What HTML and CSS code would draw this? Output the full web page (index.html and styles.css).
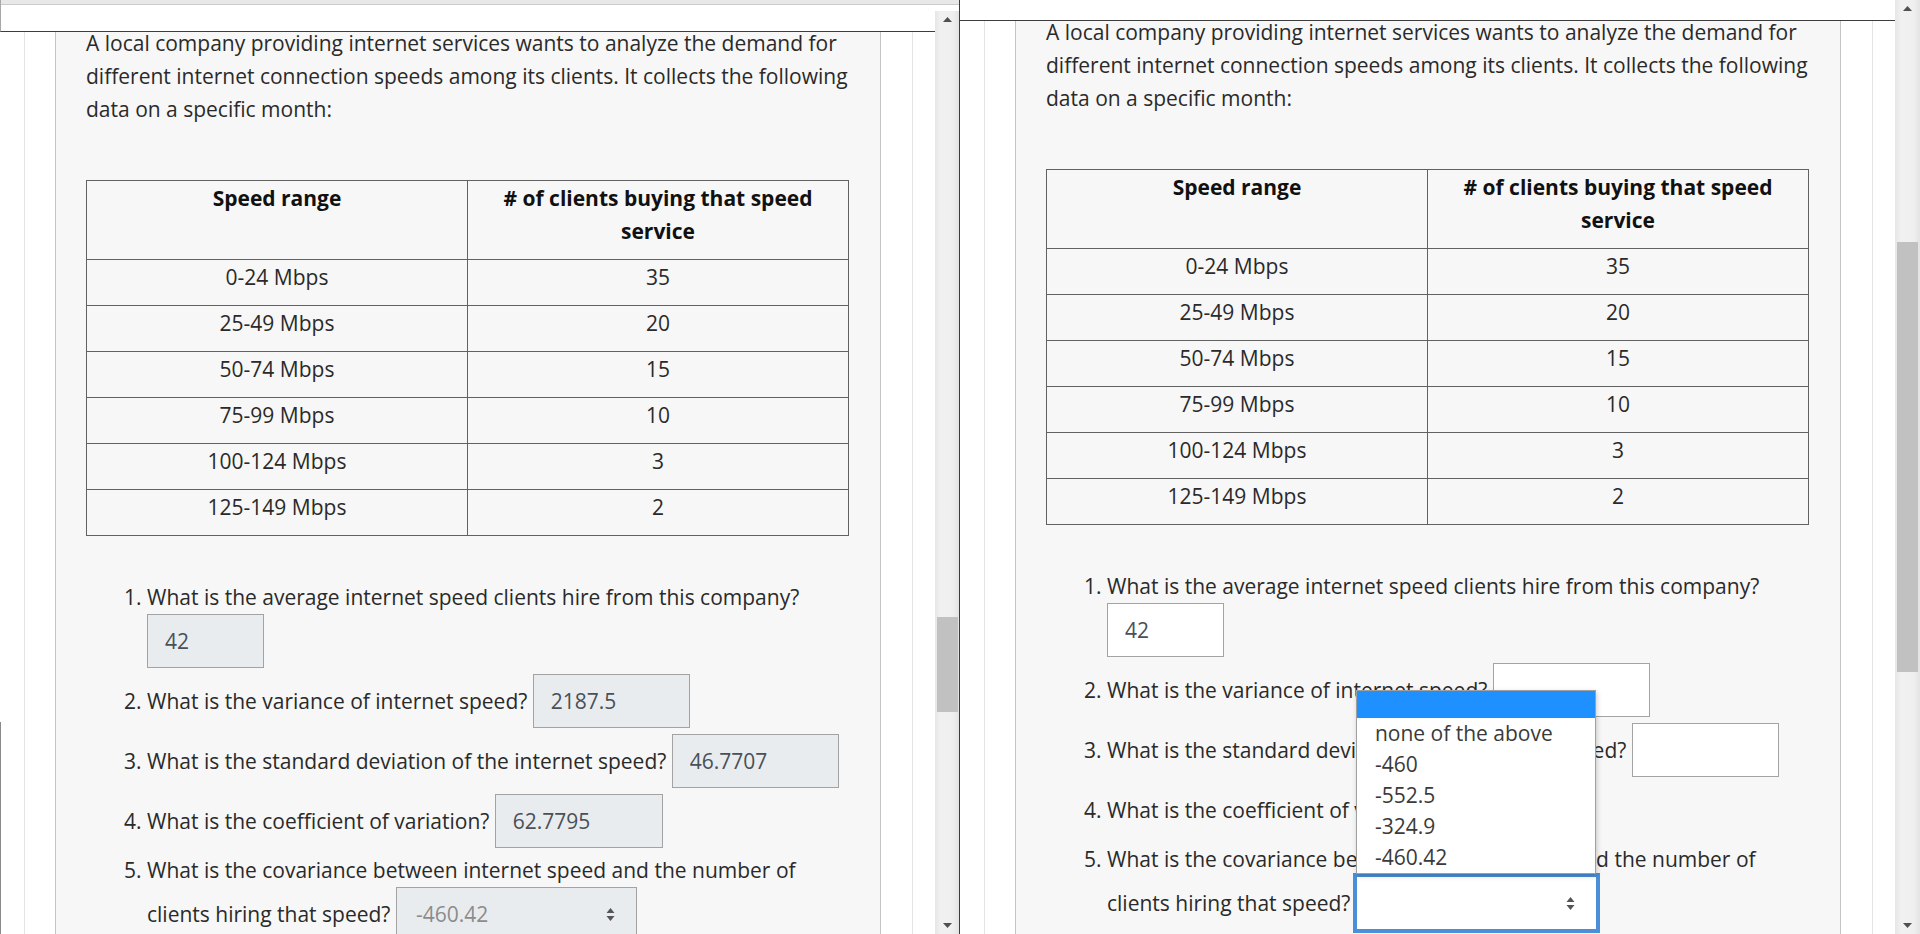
FILE: index.html
```html
<!DOCTYPE html>
<html lang="en">
<head>
<meta charset="utf-8">
<title>Internet speed demand</title>
<link rel="stylesheet" href="styles.css">
</head>
<body>
<div class="screen">

  <section class="frame frame-left">
    <div class="frame-strip"></div>
    <div class="frame-body">
      <div class="viewport">
        <div class="topbar"></div>
        <div class="page">
          <div class="container">
            <div class="card">
              <p class="intro">A local company providing internet services wants to analyze the demand for different internet connection speeds among its clients. It collects the following data on a specific month:</p>
              <table class="data">
                <colgroup><col class="half"><col class="half"></colgroup>
                <thead>
                  <tr><th>Speed range</th><th># of clients buying that speed service</th></tr>
                </thead>
                <tbody>
                  <tr><td>0-24 Mbps</td><td>35</td></tr>
                  <tr><td>25-49 Mbps</td><td>20</td></tr>
                  <tr><td>50-74 Mbps</td><td>15</td></tr>
                  <tr><td>75-99 Mbps</td><td>10</td></tr>
                  <tr><td>100-124 Mbps</td><td>3</td></tr>
                  <tr><td>125-149 Mbps</td><td>2</td></tr>
                </tbody>
              </table>
              <ol class="questions">
                <li>What is the average internet speed clients hire from this company? <input class="answer locked w-q1" value="42" readonly></li>
                <li>What is the variance of internet speed? <input class="answer locked w-q2" value="2187.5" readonly></li>
                <li>What is the standard deviation of the internet speed? <input class="answer locked w-q3" value="46.7707" readonly></li>
                <li>What is the coefficient of variation? <input class="answer locked w-q4" value="62.7795" readonly></li>
                <li>What is the covariance between internet speed and the number of clients hiring that speed? <span class="select-wrap"><span class="select locked"><span class="select-value muted">-460.42</span><svg class="select-arrow" width="9" height="15" viewBox="0 0 9 15"><path d="M0.5 6 L4.5 1 L8.5 6 Z M0.5 9 L4.5 14 L8.5 9 Z" fill="#555"/></svg></span></span></li>
              </ol>
            </div>
          </div>
        </div>
      </div>
      <div class="scrollbar">
        <div class="sb-btn"><svg width="9" height="5" viewBox="0 0 9 5"><path d="M0 5 L4.5 0 L9 5 Z" fill="#505050"/></svg></div>
        <div class="sb-track"><div class="thumb thumb-left"></div></div>
        <div class="sb-btn"><svg width="9" height="5" viewBox="0 0 9 5"><path d="M0 0 L4.5 5 L9 0 Z" fill="#505050"/></svg></div>
      </div>
    </div>
  </section>

  <section class="frame frame-right">
    <div class="frame-body">
      <div class="viewport">
        <div class="topbar"></div>
        <div class="page">
          <div class="container">
            <div class="card">
              <p class="intro">A local company providing internet services wants to analyze the demand for different internet connection speeds among its clients. It collects the following data on a specific month:</p>
              <table class="data">
                <colgroup><col class="half"><col class="half"></colgroup>
                <thead>
                  <tr><th>Speed range</th><th># of clients buying that speed service</th></tr>
                </thead>
                <tbody>
                  <tr><td>0-24 Mbps</td><td>35</td></tr>
                  <tr><td>25-49 Mbps</td><td>20</td></tr>
                  <tr><td>50-74 Mbps</td><td>15</td></tr>
                  <tr><td>75-99 Mbps</td><td>10</td></tr>
                  <tr><td>100-124 Mbps</td><td>3</td></tr>
                  <tr><td>125-149 Mbps</td><td>2</td></tr>
                </tbody>
              </table>
              <ol class="questions">
                <li>What is the average internet speed clients hire from this company? <input class="answer w-q1" value="42"></li>
                <li>What is the variance of internet speed? <input class="answer w-q2" value=""></li>
                <li>What is the standard deviation of the internet speed? <input class="answer w-q3b" value=""></li>
                <li>What is the coefficient of variation? <input class="answer w-q4b" value=""></li>
                <li>What is the covariance between internet speed and the number of clients hiring that speed? <span class="select-wrap"><span class="select focused"><span class="select-value">&nbsp;</span><svg class="select-arrow" width="9" height="15" viewBox="0 0 9 15"><path d="M0.5 6 L4.5 1 L8.5 6 Z M0.5 9 L4.5 14 L8.5 9 Z" fill="#555"/></svg></span><span class="dropdown"><span class="opt hl"></span><span class="opt">none of the above</span><span class="opt">-460</span><span class="opt">-552.5</span><span class="opt">-324.9</span><span class="opt">-460.42</span></span></span></li>
              </ol>
            </div>
          </div>
        </div>
      </div>
      <div class="scrollbar">
        <div class="sb-btn"><svg width="9" height="5" viewBox="0 0 9 5"><path d="M0 5 L4.5 0 L9 5 Z" fill="#505050"/></svg></div>
        <div class="sb-track"><div class="thumb thumb-right"></div></div>
        <div class="sb-btn"><svg width="9" height="5" viewBox="0 0 9 5"><path d="M0 0 L4.5 5 L9 0 Z" fill="#505050"/></svg></div>
      </div>
    </div>
  </section>

</div>
</body>
</html>
```

FILE: styles.css
```css
* { box-sizing: border-box; }

html, body {
  margin: 0;
  padding: 0;
}

body {
  width: 1920px;
  height: 934px;
  overflow: hidden;
  background: #fff;
  font-family: "Open Sans", "Noto Sans", sans-serif;
  font-size: 21px;
  line-height: 33px;
  color: #2a2a2a;
}

.screen {
  display: flex;
  width: 1920px;
  height: 934px;
}

.frame {
  position: relative;
  width: 960px;
  height: 934px;
  flex: none;
  display: flex;
  flex-direction: column;
  overflow: hidden;
  background: #fff;
}

.frame-left {
  border-right: 1px solid #3c3c3c;
}

.frame-left::after {
  content: "";
  position: absolute;
  left: 0;
  top: 722px;
  bottom: 0;
  width: 1px;
  background: #8a8a8a;
}

.frame-strip {
  height: 11px;
  flex: none;
  background: linear-gradient(#e8e8e8 0, #e8e8e8 4px, #cbcbcb 4px, #cbcbcb 5px, #fff 5px);
  border-left: 1px solid #a8a8a8;
}

.frame-body {
  flex: 1;
  min-height: 0;
  display: flex;
}

.viewport {
  position: relative;
  width: 935px;
  flex: none;
  overflow: hidden;
}

.topbar {
  position: absolute;
  top: 0;
  left: 0;
  right: 0;
  height: 21px;
  background: #fff;
  border-bottom: 1px solid #3d3d3d;
  z-index: 3;
}

.frame-left .topbar {
  border-left: 1px solid #a8a8a8;
}

.page {
  padding: 0 22px 0 24px;
}

.container {
  border-left: 1px solid #e3e3e3;
  border-right: 1px solid #e3e3e3;
  padding: 0 31px 0 30px;
}

.card {
  border: 1px solid #c4c4c4;
  background: #f7f7f7;
  padding: 15px 31px 60px 30px;
}

.intro {
  margin: 0 0 54px;
}

.data {
  width: 100%;
  border-collapse: collapse;
  margin: 0 0 45px;
  table-layout: fixed;
}

.data .half { width: 50%; }

.data th,
.data td {
  border: 1px solid #616161;
  padding: 1px 8px 11px;
  text-align: center;
  vertical-align: top;
  font-weight: 400;
}

.data th {
  font-weight: 700;
  color: #111;
}

.questions {
  margin: 0;
  padding-left: 61px;
}

.questions li {
  margin-bottom: 6px;
}

.answer {
  display: inline-block;
  height: 54px;
  vertical-align: baseline;
  border: 1px solid #a3a3a3;
  border-radius: 0;
  background: #fff;
  font-family: inherit;
  font-size: 21px;
  color: #495057;
  padding: 0 0 0 17px;
  margin: 0;
  outline: none;
}

.answer.locked {
  background: #e9ecef;
}

.w-q1 { width: 117px; }
.w-q2 { width: 157px; }
.w-q3 { width: 167px; }
.w-q3b { width: 147px; }
.w-q4 { width: 168px; }
.w-q4b { width: 128px; }

.select-wrap {
  position: relative;
  display: inline-block;
  vertical-align: baseline;
}

.select {
  display: inline-flex;
  align-items: center;
  justify-content: space-between;
  width: 241px;
  height: 54px;
  padding: 0 21px 0 19px;
  border: 1px solid #a3a3a3;
  background: #fff;
  vertical-align: baseline;
}

.select.locked {
  background: #e9ecef;
}

.select.focused {
  border-color: #4a8fd8;
  outline: 3px solid #4a8fd8;
}

.select-value {
  color: #444;
}

.select-value.muted {
  color: #8c8c8c;
}

.select-arrow {
  flex: none;
}

.dropdown {
  position: absolute;
  left: 0;
  bottom: calc(100% + 2px);
  width: 240px;
  display: flex;
  flex-direction: column;
  background: #fff;
  border: 1px solid #a0a0a0;
  box-shadow: 1px 2px 5px rgba(0, 0, 0, 0.2);
  z-index: 5;
}

.opt {
  display: block;
  height: 31px;
  line-height: 31px;
  padding-left: 18px;
  color: #3a3a3a;
  white-space: nowrap;
}

.opt.hl {
  height: 27px;
  background: #1e90ff;
}

.scrollbar {
  flex: none;
  display: flex;
  flex-direction: column;
  background: linear-gradient(to right, #e6e6e6, #f1f1f1 25%, #efefef 75%, #e3e3e3);
}

.frame-left .scrollbar { width: 24px; }
.frame-right .scrollbar { width: 25px; }

.sb-btn {
  height: 17px;
  flex: none;
  display: flex;
  align-items: center;
  justify-content: center;
}

.sb-track {
  flex: 1;
  min-height: 0;
}

.thumb {
  width: 21px;
  margin-left: 2px;
  background: #c1c1c1;
}

.thumb-left {
  margin-top: 589px;
  height: 95px;
}

.thumb-right {
  margin-top: 225px;
  height: 430px;
}
```
